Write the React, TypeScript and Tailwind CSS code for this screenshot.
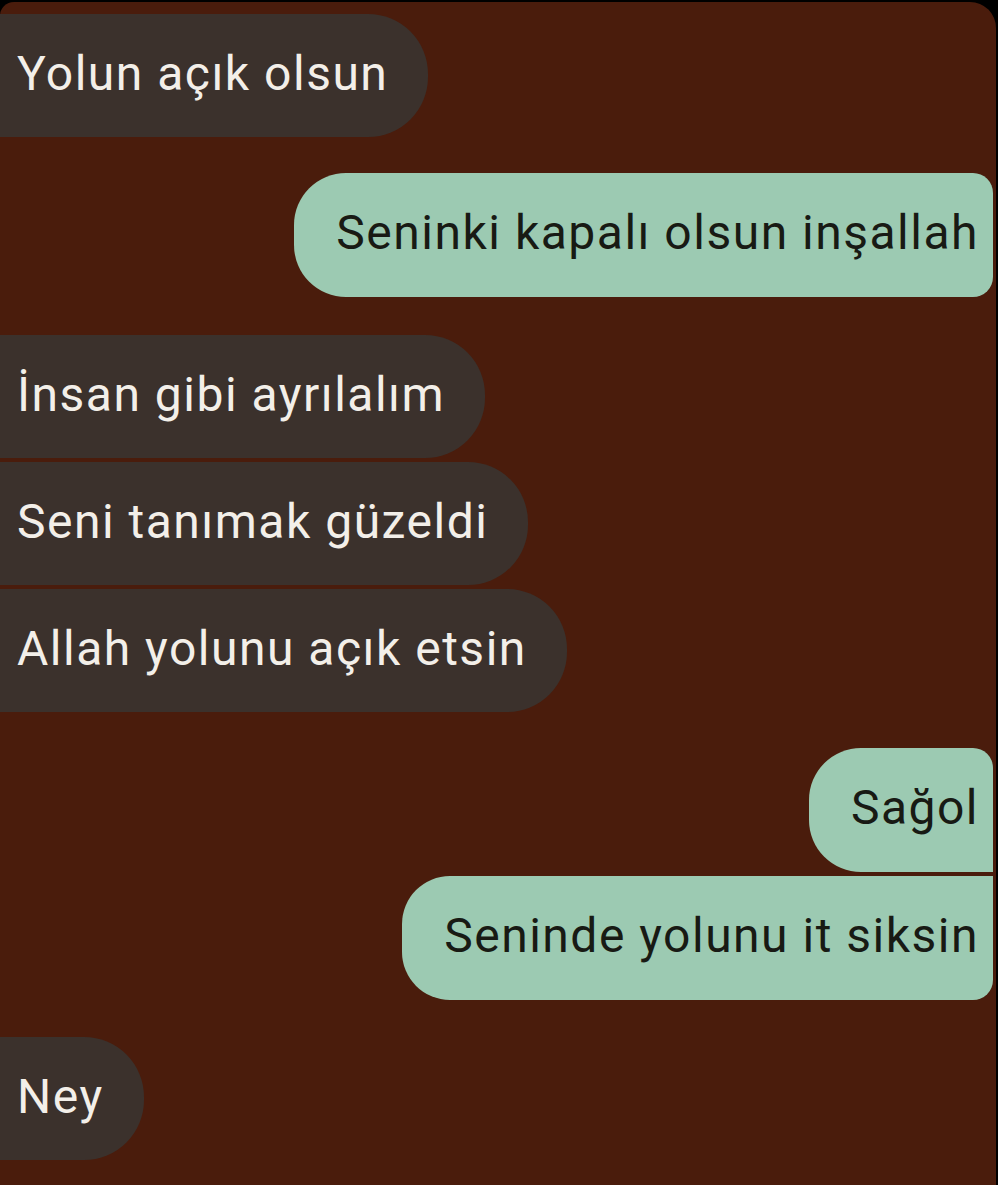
import React from "react";

const font = { fontFamily: "Roboto, 'Noto Sans', 'Liberation Sans', sans-serif" };

function Left({ text, className = "" }: { text: string; className?: string }) {
  return (
    <div className={"self-start flex items-center h-[123px] bg-[#3b312c] rounded-r-[60px] pl-[17px] pr-[40px] text-[#f3efe9] text-[48px] tracking-[1.5px] leading-none " + className}>
      <span className="relative top-[-2px]">{text}</span>
    </div>
  );
}

function Right({ text, className = "" }: { text: string; className?: string }) {
  return (
    <div className={"self-end mr-[3px] flex items-center h-[124px] bg-[#9ccab2] pl-[42px] pr-[14px] text-[#181a14] text-[48px] tracking-[1.5px] leading-none " + className}>
      <span className="relative top-[-2px]">{text}</span>
    </div>
  );
}

export default function App() {
  return (
    <div className="bg-black w-[998px] h-[1185px] pt-[2px] pr-[2px] overflow-hidden" style={font}>
      <div className="bg-[#4a1c0c] w-[996px] h-[1183px] rounded-tl-[14px] rounded-tr-[26px] pt-[12px] flex flex-col">
        <Left text="Yolun açık olsun" />
        <Right text="Seninki kapalı olsun inşallah" className="mt-[36px] rounded-l-[52px] rounded-r-[20px]" />
        <Left text="İnsan gibi ayrılalım" className="mt-[38px]" />
        <Left text="Seni tanımak güzeldi" className="mt-[4px]" />
        <Left text="Allah yolunu açık etsin" className="mt-[4px]" />
        <Right text="Sağol" className="mt-[36px] rounded-l-[52px] rounded-tr-[20px]" />
        <Right text="Seninde yolunu it siksin" className="mt-[4px] rounded-l-[48px] rounded-br-[20px]" />
        <Left text="Ney" className="mt-[37px]" />
      </div>
    </div>
  );
}
